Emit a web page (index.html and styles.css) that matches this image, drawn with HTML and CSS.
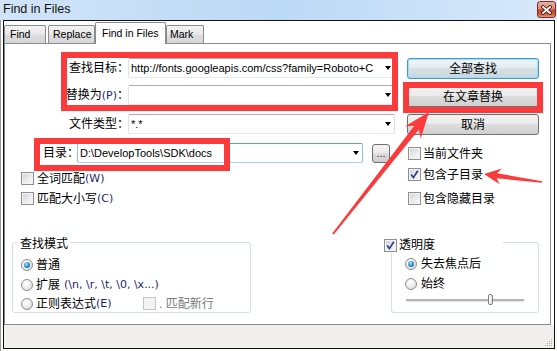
FILE: index.html
```html
<!DOCTYPE html>
<html lang="zh-CN">
<head>
<meta charset="utf-8">
<title>Find in Files</title>
<link rel="stylesheet" href="styles.css">
</head>
<body>
<div class="win">
  <div class="titlebar">
    <span class="title">Find in Files</span>
    <span class="close"><svg width="11" height="10" viewBox="0 0 11 10"><path d="M2 2 L9 8 M9 2 L2 8" stroke="#4a1c14" stroke-width="3.6" stroke-linecap="square"/><path d="M2 2 L9 8 M9 2 L2 8" stroke="#fff" stroke-width="1.8" stroke-linecap="square"/></svg></span>
  </div>
  <div class="client">
    <div class="tabs">
      <span class="tab t-find">Find</span>
      <span class="tab t-replace">Replace</span>
      <span class="tab t-files active">Find in Files</span>
      <span class="tab t-mark">Mark</span>
    </div>
    <div class="panel">
      <div class="top">
        <div class="form">
          <div class="row row1">
            <span class="lbl">查找目标：</span>
            <div class="combo"><span class="val">http://fonts.googleapis.com/css?family=Roboto+C</span><i class="dd"></i></div>
          </div>
          <div class="row row2">
            <span class="lbl">替换为<span class="lat">(P)</span>：</span>
            <div class="combo"><span class="val"></span><i class="dd"></i></div>
          </div>
          <div class="row row3">
            <span class="lbl">文件类型：</span>
            <div class="combo"><span class="val">*.*</span><i class="dd"></i></div>
          </div>
          <div class="row row4">
            <span class="lbl lbl-dir">目录：</span>
            <div class="combo combo-dir"><span class="val">D:\DevelopTools\SDK\docs</span><i class="dd"></i></div>
            <span class="browse">...</span>
          </div>
          <div class="chk chk-w"><span class="cb"></span>全词匹配<span class="lat">(W)</span></div>
          <div class="chk chk-c"><span class="cb"></span>匹配大小写<span class="lat">(C)</span></div>
        </div>
        <div class="side">
          <span class="btn btn-default">全部查找</span>
          <span class="btn">在文章替换</span>
          <span class="btn">取消</span>
          <div class="chk chk-r chk-r1"><span class="cb"></span>当前文件夹</div>
          <div class="chk chk-r chk-r2"><span class="cb on"><svg width="11" height="11" viewBox="0 0 11 11"><path d="M2.2 5.6 L4.4 8.6 L8.8 1.8" fill="none" stroke="#2a3d8f" stroke-width="1.7"/></svg></span>包含子目录</div>
          <div class="chk chk-r chk-r3"><span class="cb"></span>包含隐藏目录</div>
        </div>
      </div>
      <div class="bottom">
        <div class="grp grp-mode">
          <span class="legend">查找模式</span>
          <div class="opt o1"><span class="rb on"></span>普通</div>
          <div class="opt o2"><span class="rb"></span>扩展<span class="lat lat-sp">(\n, \r, \t, \0, \x...)</span></div>
          <div class="opt o3"><span class="rb-wide"><span class="rb"></span>正则表达式<span class="lat">(E)</span></span><span class="cb dis"></span><span class="disabled">. 匹配新行</span></div>
        </div>
        <div class="grp grp-trans">
          <span class="legend legend-chk"><span class="cb on"><svg width="11" height="11" viewBox="0 0 11 11"><path d="M2.2 5.6 L4.4 8.6 L8.8 1.8" fill="none" stroke="#2a3d8f" stroke-width="1.7"/></svg></span>透明度</span>
          <div class="opt p1"><span class="rb on"></span>失去焦点后</div>
          <div class="opt p2"><span class="rb"></span>始终</div>
          <div class="slider"><span class="track"></span><span class="thumb" style="left:82px"></span></div>
        </div>
      </div>
    </div>
    <div class="status">
      <svg class="grip" width="10" height="10" viewBox="0 0 10 10">
        <rect x="8" y="2" width="1" height="1" fill="#a8a8a8"/>
        <rect x="6" y="4" width="1" height="1" fill="#a8a8a8"/><rect x="8" y="4" width="1" height="1" fill="#a8a8a8"/>
        <rect x="4" y="6" width="1" height="1" fill="#a8a8a8"/><rect x="6" y="6" width="1" height="1" fill="#a8a8a8"/><rect x="8" y="6" width="1" height="1" fill="#a8a8a8"/>
        <rect x="2" y="8" width="1" height="1" fill="#a8a8a8"/><rect x="4" y="8" width="1" height="1" fill="#a8a8a8"/><rect x="6" y="8" width="1" height="1" fill="#a8a8a8"/><rect x="8" y="8" width="1" height="1" fill="#a8a8a8"/>
      </svg>
    </div>
  </div>
  <div class="mark mark1"></div>
  <div class="mark mark2"></div>
  <div class="mark mark3"></div>
  <svg class="arrows" width="557" height="351" viewBox="0 0 557 351">
    <polygon fill="#fb3b3b" points="429,112 420.7,138.6 418.9,129.6 333.8,234.6 332.2,233.4 414.3,125.8 405.1,126.2"/>
    <polygon fill="#fb3b3b" points="484,174 501.9,168.4 497.2,173.3 542.1,181.3 541.9,182.7 496.6,178.3 499.7,184.2"/>
  </svg>
</div>
</body>
</html>
```

FILE: styles.css
```css
* { box-sizing: border-box; margin: 0; padding: 0; }
html, body { width: 557px; height: 351px; overflow: hidden; background: #fff; }
body {
  font-family: "Liberation Sans", "Noto Sans CJK SC", sans-serif;
  font-size: 12px;
  color: #000;
}

.win {
  position: relative;
  width: 557px;
  height: 351px;
  background: #fff;
  box-shadow: inset 1px 0 #9a9a9a;
}

/* title bar */
.titlebar {
  height: 20px;
  display: flex;
  align-items: flex-start;
  background: linear-gradient(to right, #d1e4f7 0%, #bcd9f6 50%, #d9e9fa 100%);
}
.title {
  margin-left: 3px;
  margin-top: 2px;
  font-size: 12.5px;
  line-height: 15px;
  color: #111;
}
.close {
  margin-left: auto;
  margin-right: 1px;
  margin-top: 1px;
  width: 19px;
  height: 17px;
  border: 1px solid #7e2e20;
  border-radius: 3px;
  background: linear-gradient(#eab0a2 0%, #dd8a74 45%, #c5472c 52%, #c9573a 80%, #e39a7f 100%);
  display: flex;
  align-items: center;
  justify-content: center;
}

/* client area */
.client {
  margin-left: 3px;
  width: 552px;
  height: 329px;
  border: 1px solid #111;
  display: flex;
  flex-direction: column;
  background: #fff;
}

.tabs {
  display: flex;
  height: 22px;
  align-items: flex-start;
  position: relative;
  z-index: 2;
}
.tab {
  height: 18px;
  margin-top: 4px;
  border: 1px solid #898c95;
  border-bottom: none;
  border-radius: 2px 2px 0 0;
  background: linear-gradient(#f4f4f4, #e6e6e6 50%, #dcdcdc 55%, #d6d6d6);
  font-size: 10.5px;
  line-height: 17px;
  padding-left: 5px;
  white-space: nowrap;
}
.t-find { width: 42px; margin-right: 2px; }
.t-replace { width: 47px; padding-left: 4px; }
.t-files { width: 71px; padding-left: 6px; }
.t-mark { width: 38px; padding-left: 3px; }
.tab.active {
  height: 22px;
  margin-top: 1px;
  background: #fff;
  line-height: 20px;
}

.panel {
  width: 547px;
  height: 282px;
  border: 1px solid #898c95;
  background: #fff;
  display: flex;
  flex-direction: column;
}

.top { display: flex; height: 161px; }
.form { width: 395px; display: flex; flex-direction: column; }
.side { margin-left: 7px; width: 132px; display: flex; flex-direction: column; }

.row { display: flex; align-items: center; height: 20px; }
.row1 { margin-top: 14px; }
.row2 { margin-top: 7px; }
.row3 { margin-top: 9px; }
.row4 { margin-top: 9px; }

.lbl {
  width: 123px;
  text-align: right;
  padding-right: 5px;
  white-space: nowrap;
  line-height: 16px;
  font-feature-settings: "halt";
}
.lat {
  font-family: "DejaVu Sans", sans-serif;
  font-size: 11px;
  color: #1d2466;
  font-feature-settings: normal;
}
.lat-sp { margin-left: 4px; }

.combo {
  width: 267px;
  height: 20px;
  border: 1px solid;
  border-color: #abadb3 #dbdfe6 #e3e9ef #e2e3ea;
  border-radius: 2px;
  display: flex;
  align-items: center;
  background: #fff;
}
.val {
  flex: 1;
  padding-left: 2px;
  font-size: 11px;
  white-space: nowrap;
  overflow: hidden;
}
.dd {
  width: 0;
  height: 0;
  border-left: 3.5px solid transparent;
  border-right: 3.5px solid transparent;
  border-top: 4px solid #000;
  margin-right: 3px;
}

.lbl-dir { width: 34px; margin-left: 38px; text-align: left; padding-right: 0; }
.combo-dir { width: 286px; border-color: #5c9fd8 #8cc0ea #a9d1f2 #8cc0ea; }
.browse {
  margin-left: 9px;
  width: 18px;
  height: 19px;
  margin-top: 1px;
  border: 1px solid #707070;
  border-radius: 3px;
  background: linear-gradient(#f2f2f2, #ebebeb 45%, #dddddd 50%, #cfcfcf);
  font-size: 11px;
  line-height: 11px;
  display: flex;
  align-items: flex-end;
  justify-content: center;
  padding-bottom: 3px;
  color: #223;
}

/* checkboxes */
.chk { display: flex; align-items: center; height: 13px; white-space: nowrap; line-height: 16px; }
.cb {
  width: 13px;
  height: 13px;
  flex: none;
  border: 1px solid #8f8f8f;
  background: linear-gradient(135deg, #cfd0d2 0%, #e6e7e8 45%, #f9f9f9 100%);
  box-shadow: inset 0 0 0 1px #f3f3f3;
  margin-right: 3px;
  display: flex;
  align-items: center;
  justify-content: center;
}
.cb svg { display: block; }
.cb.dis { border-color: #c5c5c5; background: #f4f4f4; box-shadow: none; }
.chk-w { margin-top: 9px; margin-left: 16px; }
.chk-c { margin-top: 7px; margin-left: 16px; }
.chk-r { margin-left: 1px; }
.chk-r .cb { margin-right: 2px; }
.chk-r1 { margin-top: 12px; }
.chk-r2 { margin-top: 8px; }
.chk-r3 { margin-top: 11px; }

/* buttons */
.btn {
  display: flex;
  align-items: center;
  justify-content: center;
  height: 21px;
  border: 1px solid #707070;
  border-radius: 3px;
  background: linear-gradient(#f2f2f2, #ebebeb 45%, #dddddd 50%, #cfcfcf);
  line-height: 16px;
  margin-top: 7px;
}
.btn-default {
  margin-top: 14px;
  border-color: #3c9ad8;
  box-shadow: inset 0 0 0 1px #a9daf6;
  background: linear-gradient(#eef4f8, #e5edf2 45%, #d6e0e6 50%, #cbd6dd);
}

/* bottom group boxes */
.bottom { display: flex; margin-top: 37px; }
.grp {
  position: relative;
  height: 71px;
  border: 1px solid #d5dfe5;
  border-radius: 3px;
  box-shadow: inset 1px 1px #fff;
}
.grp-mode { margin-left: 7px; width: 239px; padding-top: 15px; padding-left: 8px; }
.grp-trans { margin-left: 140px; width: 148px; padding-top: 14px; padding-left: 13px; }

.legend {
  position: absolute;
  left: 5px;
  top: -7px;
  padding: 0 2px;
  background: #fff;
  line-height: 16px;
  white-space: nowrap;
}
.legend-chk {
  left: -8px;
  top: -6px;
  width: 119px;
  padding: 0;
  display: flex;
  align-items: center;
}
.legend-chk .cb { margin-right: 2px; }

.opt { display: flex; align-items: center; height: 13px; white-space: nowrap; line-height: 16px; }
.o2 { margin-top: 7px; }
.o3 { margin-top: 6px; }
.p2 { margin-top: 7px; }
.rb-wide { display: flex; align-items: center; width: 122px; }

.rb {
  width: 12px;
  height: 12px;
  flex: none;
  border-radius: 50%;
  border: 1px solid #8e8f8f;
  background: radial-gradient(circle at 40% 35%, #ffffff 0%, #ececec 50%, #d2d2d2 100%);
  margin-right: 3px;
  display: flex;
  align-items: center;
  justify-content: center;
}
.grp-trans .rb { margin-right: 4px; }
.rb.on::after {
  content: "";
  width: 6px;
  height: 6px;
  border-radius: 50%;
  background: radial-gradient(circle at 40% 35%, #a8e4ff 0%, #2b86c9 55%, #0f4f8c 100%);
}
.disabled { color: #7a7a7a; }

.slider { position: relative; margin-top: 4px; margin-left: 1px; height: 12px; width: 118px; }
.track {
  position: absolute;
  left: 0;
  top: 5px;
  width: 118px;
  height: 2px;
  background: #b5b5b5;
  border-bottom: 1px solid #e6e6e6;
  box-sizing: content-box;
}
.thumb {
  position: absolute;
  top: 0;
  width: 5px;
  height: 11px;
  border: 1px solid #7f7f7f;
  border-radius: 2px;
  background: linear-gradient(to right, #fdfdfd, #e0e0e0);
}

.status {
  flex: 1;
  background: #f0efee;
  display: flex;
  justify-content: flex-end;
  align-items: flex-end;
}
.grip { display: block; margin: 0 1px 1px 0; }

/* annotations */
.mark {
  position: absolute;
  border: 6px solid #fb3b3b;
}
.mark1 { left: 61px; top: 52px; width: 337px; height: 59px; }
.mark2 { left: 34px; top: 138px; width: 196px; height: 33px; }
.mark3 { left: 403px; top: 82px; width: 140px; height: 31px; }

.arrows { position: absolute; left: 0; top: 0; pointer-events: none; }
```
